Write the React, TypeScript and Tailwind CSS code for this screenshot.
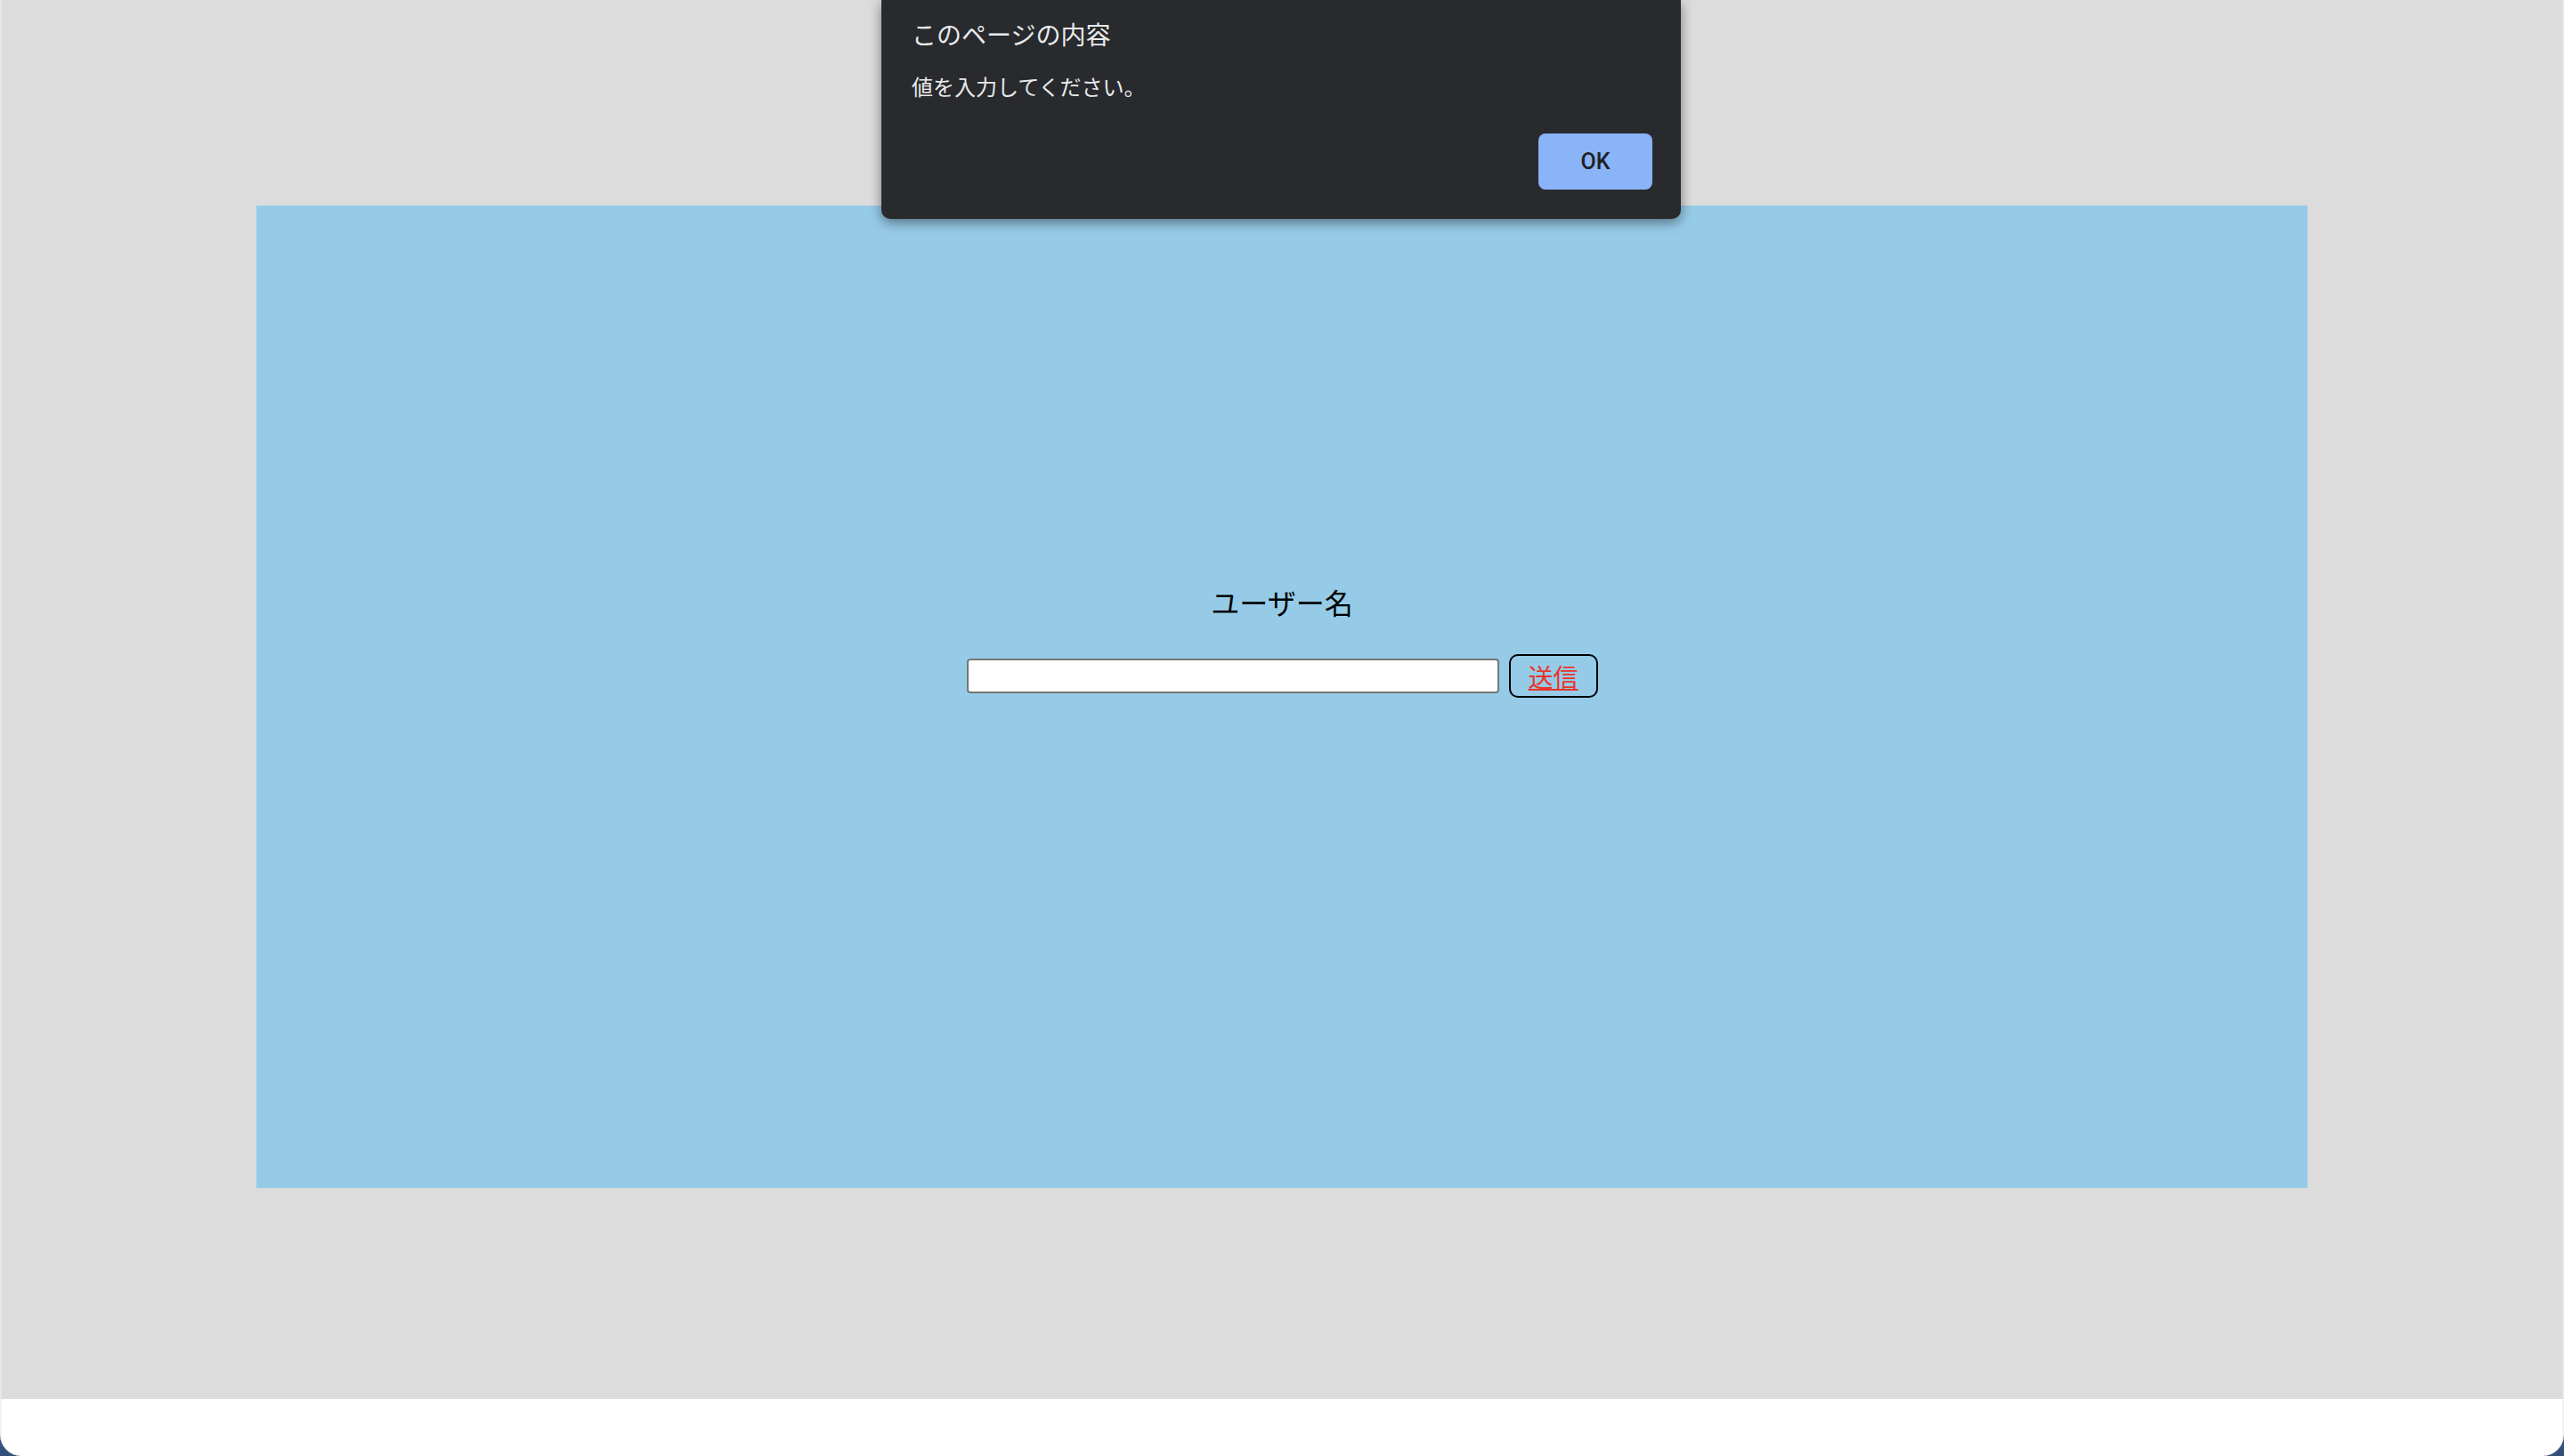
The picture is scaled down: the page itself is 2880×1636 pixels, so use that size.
import React from "react";

const AlertDialog = () => {
  return (
    <div className="absolute left-[990px] top-0 flex h-[246px] w-[898px] flex-col rounded-b-[10px] bg-[#292a2d] pb-[33px] pl-[34px] pr-[32px] pt-[22px] shadow-[0_4px_14px_rgba(0,0,0,0.45)]">
      {/* Title */}
      <p className="text-[28px] leading-[32px] text-[#e8eaed]">このページの内容</p>
      {/* Message */}
      <p className="mt-[28px] text-[24px] leading-[30px] text-[#e8eaed]">値を入力してください。</p>
      <div className="mt-auto flex justify-end">
        <button className="h-[63px] w-[128px] rounded-[8px] bg-[#8ab4f8] font-['Roboto',sans-serif] text-[25px] font-medium text-[#202124]">
          OK
        </button>
      </div>
    </div>
  );
};

export default function App() {
  return (
    <div className="relative h-[1636px] w-full bg-[#34507a] font-['Noto_Sans_CJK_JP',sans-serif]">
      {/* Page area */}
      <div className="flex h-[1572px] flex-col border-x-2 border-[#e6e6e6] bg-[#dcdcdc]">
        <div className="mx-auto mt-[231px] flex h-[1104px] w-[2304px] flex-col items-center bg-[#96cbe8] pt-[422px]">
          <label className="text-[32px] leading-[46px] text-black">ユーザー名</label>
          <form className="mt-[36px] flex items-center gap-[11px]" onSubmit={(e) => e.preventDefault()}>
            <input
              type="text"
              className="h-[39px] w-[598px] rounded-[4px] border-2 border-[#767676] bg-white px-2 text-[26px]"
            />
            <button
              type="submit"
              className="h-[49px] w-[100px] rounded-[10px] border-2 border-black text-[28px] leading-none text-[#e8362a] underline"
            >
              送信
            </button>
          </form>
        </div>
      </div>
      {/* Bottom strip */}
      <div className="h-[64px] rounded-b-[24px] border-x-2 border-[#f2f2f2] bg-white" />
      <AlertDialog />
    </div>
  );
}
